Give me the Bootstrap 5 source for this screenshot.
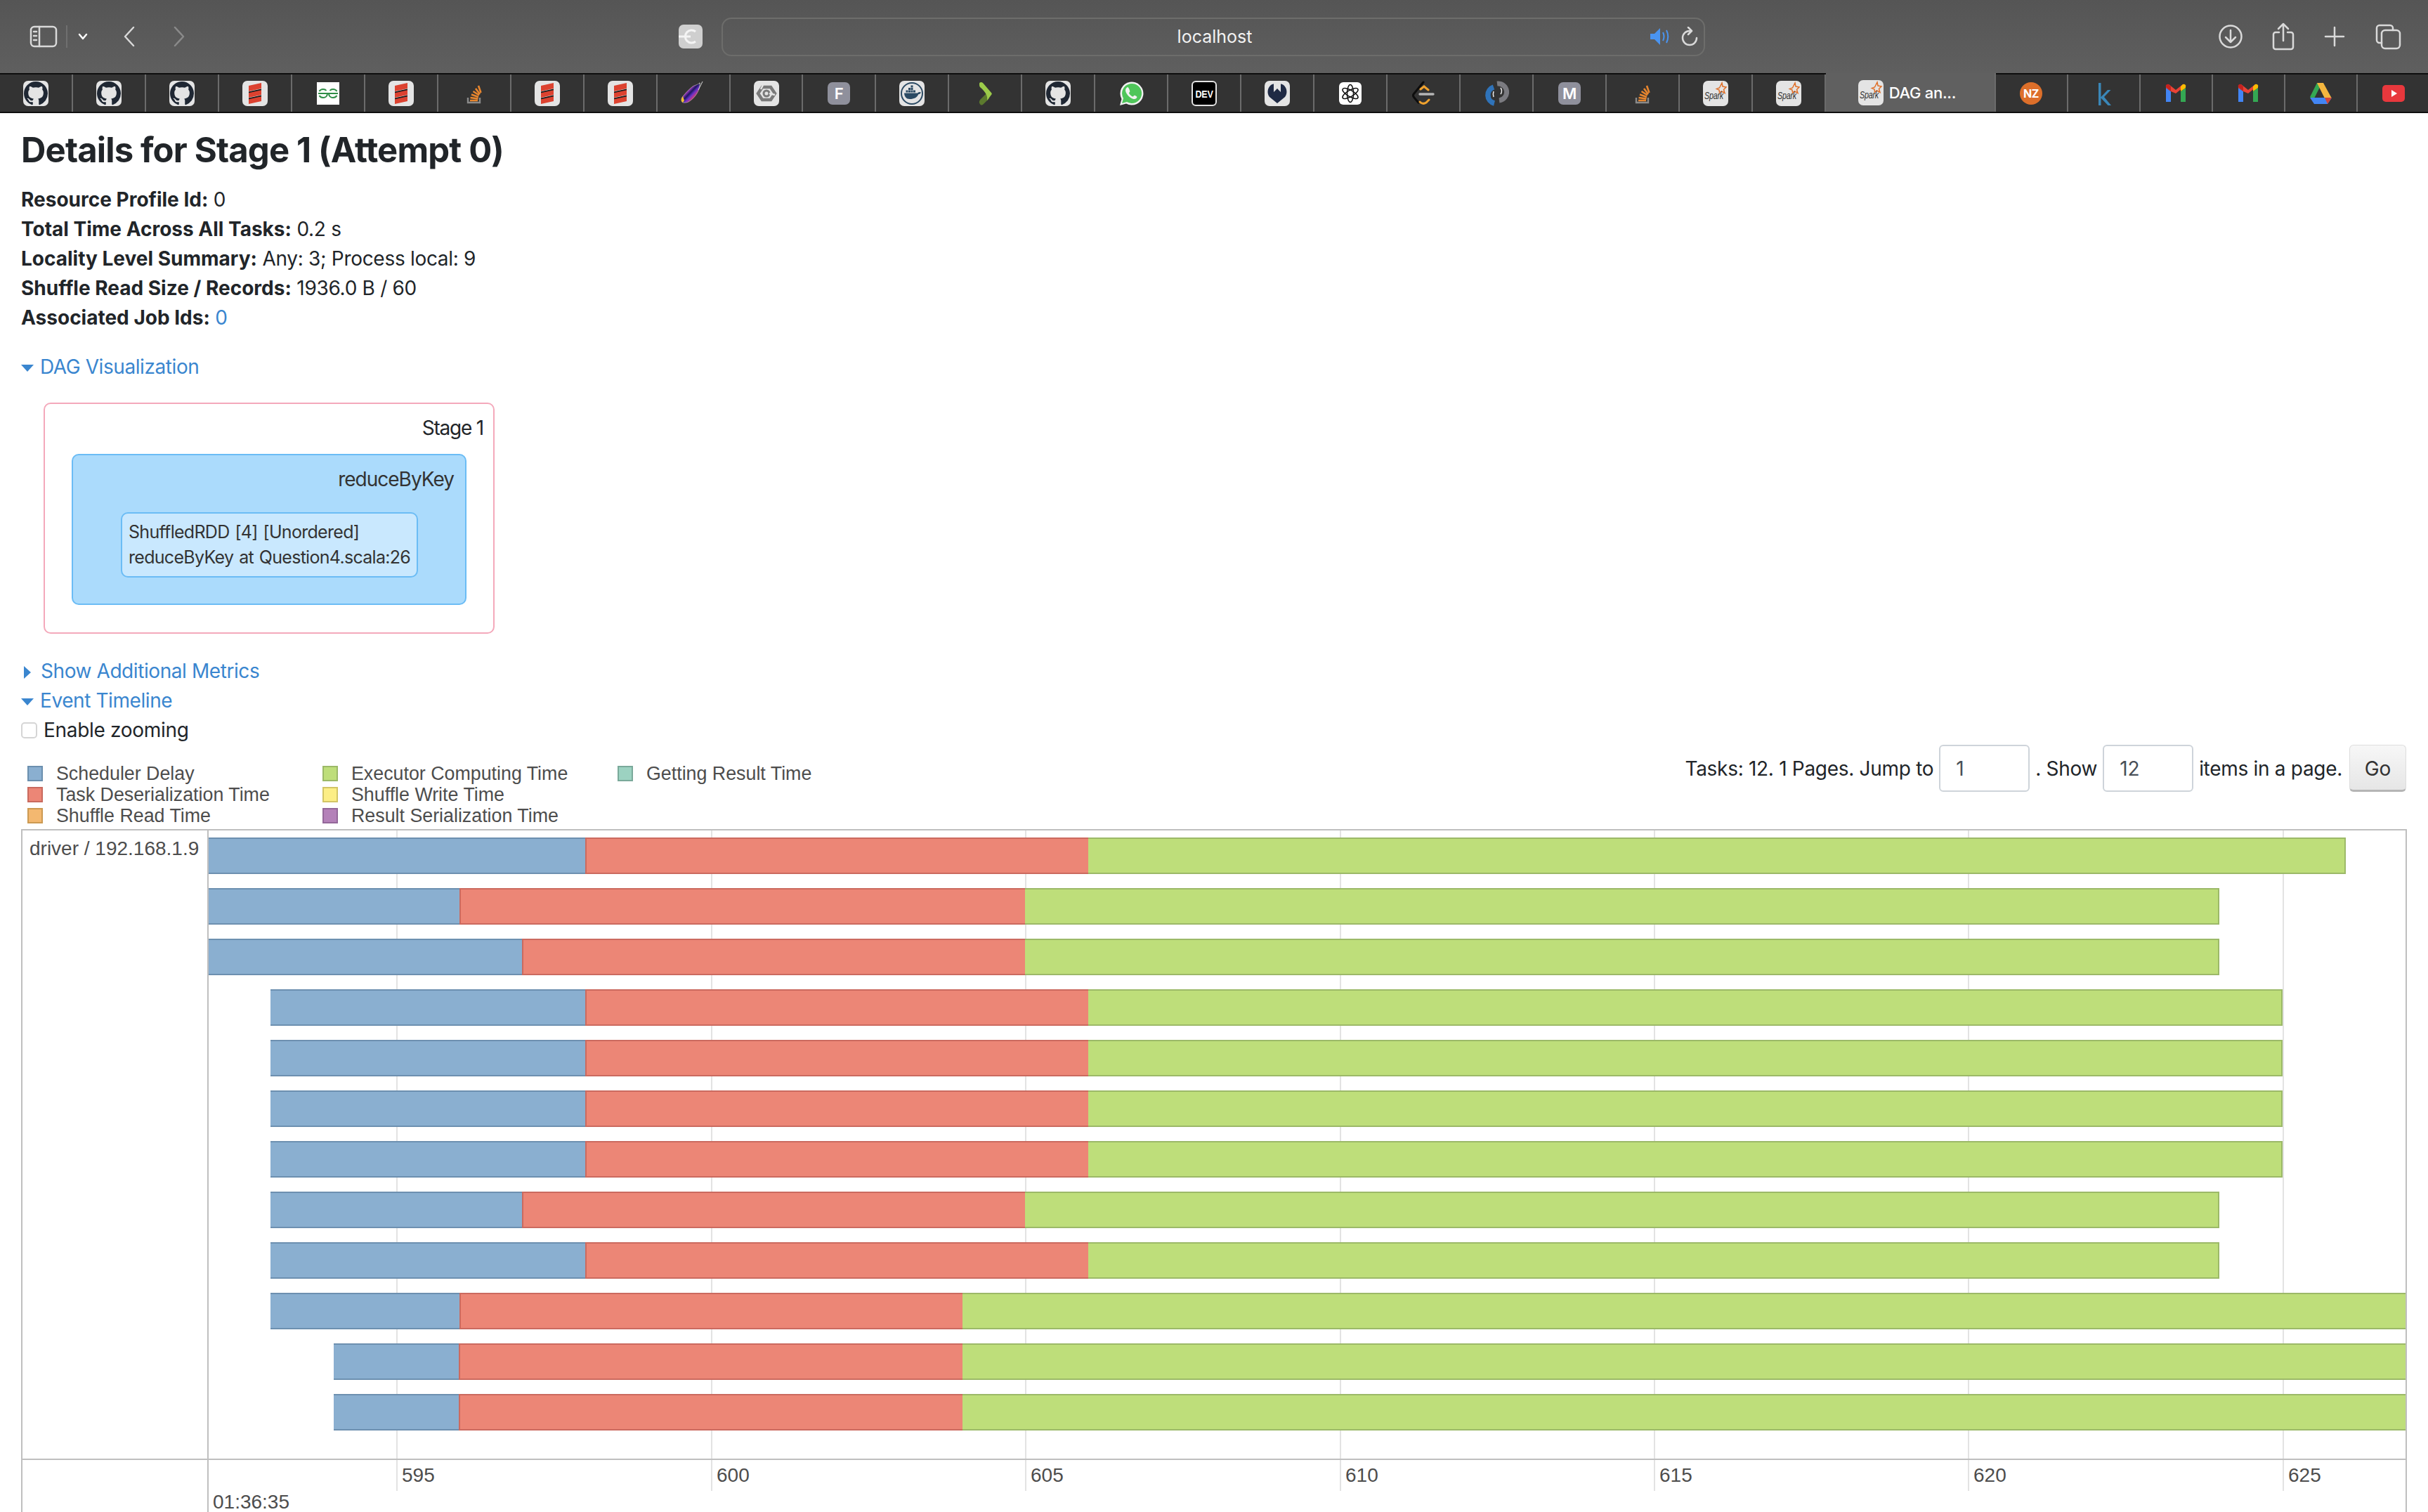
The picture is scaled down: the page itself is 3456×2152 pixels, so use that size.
<!DOCTYPE html>
<html lang="en">
<head>
  <meta charset="UTF-8">
  <title>Details for Stage 1 (Attempt 0)</title>
  <link href="https://cdn.jsdelivr.net/npm/bootstrap@5.3.0/dist/css/bootstrap.min.css" rel="stylesheet">
  <style>
    html, body { height: 100%; }
    body { font-family: Inter, "Liberation Sans", sans-serif; font-size: 28px; line-height: 42px; color: #212529; letter-spacing: -.3px; overflow: hidden; }
    strong { letter-spacing: 0; }
    a { color: #3a86cf; text-decoration: none; letter-spacing: -.42px; }

    /* browser chrome */
    .svg-defs { position: absolute; width: 0; height: 0; }
    .tool-bar { height: 104px; background: linear-gradient(#555, #5f5f5f); flex: none; }
    .tool-icon { fill: none; stroke: #d9d9d9; stroke-width: 2.5; stroke-linecap: round; stroke-linejoin: round; display: block; }
    .addr-bar { width: 1400px; height: 55px; border: 2px solid #6d6d6b; border-radius: 14px; color: #f2f2f2; font-size: 25px; letter-spacing: 0; padding-right: 6px; }
    .addr-text { left: 4px; right: 0; top: 0; bottom: 0; line-height: 51px; }
    .tab-strip { height: 57px; background: #333; border-top: 2px solid #0e0e0e; border-bottom: 2px solid #0e0e0e; flex: none; }
    .tab-cell { width: 103.96px; border-right: 2px solid #6b6b6b; flex: none; }
    .tab-right .tab-cell { width: 103px; }
    .tab-right .tab-cell:last-child { border-right: 0; flex: 1; }
    .tab-active { width: 242px; flex: none; margin-top: -2px; background: #606060; border-right: 2px solid #6b6b6b; color: #fff; font-size: 22px; letter-spacing: -.3px; padding-left: 46px; font-weight: 500; }
    .fav { width: 36px; height: 36px; display: block; }

    /* page */
    .stage-title { font-size: 49px; line-height: 58px; font-weight: 700; letter-spacing: -.85px; margin: 24px 0 20px; }
    .page-pad { padding-left: 30px; }
    .caret-down { display: inline-block; width: 0; height: 0; border-left: 9.5px solid transparent; border-right: 9.5px solid transparent; border-top: 10px solid #3a86cf; margin-right: 9px; vertical-align: 3px; }
    .caret-right { display: inline-block; width: 0; height: 0; border-top: 9px solid transparent; border-bottom: 9px solid transparent; border-left: 10px solid #3a86cf; margin: 0 14px 0 4px; vertical-align: -1px; }

    .dag-stage { width: 642px; height: 329px; margin: 30px 0 32px 32px; border: 2px solid #f4a9bb; border-radius: 10px; padding: 13px 14px 0 0; letter-spacing: -1.2px; }
    .dag-cluster { width: 562px; height: 215px; margin: 16px 0 0 38px; background: #abdbfc; border: 2px solid #6bbcf5; border-radius: 10px; padding: 13px 16px 0 0; color: #333; letter-spacing: -1px; }
    .dag-node { width: 423px; height: 93px; margin: 26px 0 0 68px; background: #c9e8fe; border: 2px solid #6bbcf5; border-radius: 10px; padding: 8px 0 0 9px; font-size: 25px; line-height: 36px; white-space: nowrap; color: #333; text-align: left; letter-spacing: -.7px; word-spacing: 1.5px; }

    .zoom-box { width: 23px; height: 23px; border: 2px solid #d5d5d5; border-radius: 5px; margin-right: 9px; background: #fff; flex: none; }

    .top-row { height: 120px; flex: none; padding-right: 31px; }
    .legend-grid { padding: 26px 0 0 9px; display: grid; grid-template-columns: repeat(3, 420px); grid-auto-flow: column; grid-template-rows: repeat(3, 30px); font-family: "Liberation Sans", sans-serif; font-size: 26.8px; line-height: 30px; letter-spacing: 0; color: #4d4d4d; }
    .legend-item { display: flex; align-items: center; gap: 19px; white-space: nowrap; }
    .swatch { width: 22px; height: 22px; border: 2px solid; flex: none; }
    .s-delay { background: #8aafd0; border-color: #6b8fae; }
    .s-deser { background: #ec8676; border-color: #c96a5e; }
    .s-read { background: #f3b870; border-color: #cc9a52; }
    .s-exec { background: #bede7a; border-color: #9cb968; }
    .s-write { background: #fcee86; border-color: #d2c566; }
    .s-ser { background: #b481b9; border-color: #94689a; }
    .s-result { background: #9cd2c1; border-color: #7aa99a; }

    .pager { height: 67px; font-size: 28px; letter-spacing: -.3px; gap: 8px; }
    .pager-input { width: 129px; height: 67px; border: 2px solid #ced4da; border-radius: 6px; padding: 0 22px; font-size: 28px; color: #495057; background: #fff; letter-spacing: 0; }
    .pager-go { width: 81px; height: 67px; padding: 2px 0 0; margin-left: 2px; border: 1px solid #ddd; border-bottom: 3px solid #b5b5b5; border-radius: 6px; background: linear-gradient(#f7f7f7, #e6e6e6); color: #333; font-size: 28px; line-height: 1; letter-spacing: 0; }

    /* timeline */
    .gantt { margin-left: 30px; width: 3396px; border: 2px solid #bfbfbf; border-bottom: 0; font-family: "Liberation Sans", sans-serif; letter-spacing: 0; color: #4d4d4d; min-height: 0; }
    .gantt-side { width: 265px; flex: none; border-right: 2px solid #bfbfbf; }
    .side-top { height: 896px; border-bottom: 2px solid #bfbfbf; padding: 5px 0 0 10px; white-space: nowrap; }
    .gantt-plot { min-width: 0; overflow: hidden; }
    .plot-rows { height: 896px; border-bottom: 2px solid #bfbfbf; padding-top: 10px; gap: 20px; }
    .tick-line { top: 0; width: 2px; height: 940px; background: #e3e3e3; }
    .tick-label { top: 897px; line-height: 42px; }
    .axis-date { margin: 42px 0 0 6px; line-height: 36px; }
    .task-row { height: 52px; flex: none; }
    .seg { height: 52px; flex: none; border: 2px solid; }
    .b-delay { background: #8aafd0; border-color: #6d90b0; border-left: 0; border-right: 0; }
    .b-deser { background: #ec8676; border-color: #cb6a5f; border-right: 0; }
    .b-exec { background: #bede7a; border-color: #9cb968; border-left: 0; }
  </style>
</head>
<body class="d-flex flex-column">

  <svg class="svg-defs" xmlns="http://www.w3.org/2000/svg">
    <defs>
      <linearGradient id="feather" x1="0" y1="0" x2="1" y2="1">
        <stop offset=".1" stop-color="#e0409a"/><stop offset=".36" stop-color="#a83ac8"/><stop offset=".48" stop-color="#1a1660"/><stop offset=".58" stop-color="#6a32c8"/><stop offset=".72" stop-color="#e03a70"/><stop offset="1" stop-color="#e03a30"/>
      </linearGradient>
    </defs>
    <symbol id="i-gh" viewBox="0 0 36 36">
      <rect width="36" height="36" rx="7" fill="#e4e4e4"/>
      <path transform="translate(1 1) scale(2.125)" fill="#1f2733" d="M8 0C3.58 0 0 3.58 0 8c0 3.54 2.29 6.53 5.47 7.59.4.07.55-.17.55-.38 0-.19-.01-.82-.01-1.49-2.01.37-2.53-.49-2.69-.94-.09-.23-.48-.94-.82-1.13-.28-.15-.68-.52-.01-.53.63-.01 1.08.58 1.23.82.72 1.21 1.87.87 2.33.66.07-.52.28-.87.51-1.07-1.78-.2-3.64-.89-3.64-3.95 0-.87.31-1.59.82-2.15-.08-.2-.36-1.02.08-2.12 0 0 .67-.21 2.2.82.64-.18 1.32-.27 2-.27.68 0 1.36.09 2 .27 1.53-1.04 2.2-.82 2.2-.82.44 1.1.16 1.92.08 2.12.51.56.82 1.27.82 2.15 0 3.07-1.87 3.75-3.65 3.95.29.25.54.73.54 1.48 0 1.07-.01 1.93-.01 2.2 0 .21.15.46.55.38A8.013 8.013 0 0016 8c0-4.42-3.58-8-8-8z"/>
    </symbol>
    <symbol id="i-scala" viewBox="0 0 36 36">
      <rect width="36" height="36" rx="7" fill="#e4e4e4"/>
      <path fill="#dc4230" d="M9 8 27 4v8L9 16zM9 17l18-4v8L9 25zM9 26l18-4v8L9 34z" transform="translate(0 -1)"/>
      <path fill="#1a1a1a" d="M9 15.500 27 11.500v1.800L9 17.300zM9 24.500 27 20.500v1.800L9 26.300z"/>
    </symbol>
    <symbol id="i-gfg" viewBox="0 0 36 36">
      <rect x="2" y="2" width="32" height="32" fill="#fff"/>
      <path fill="none" stroke="#2f8d46" stroke-width="2" d="M4 18h28M17 18c0 3.500-2.500 6-6 6-2.500 0-4.500-1.200-5.500-3M5.500 15c1-1.800 3-3 5.500-3 2 0 3.500.7 4.500 2M19 18c0 3.500 2.500 6 6 6 2.500 0 4.500-1.200 5.500-3M30.500 15c-1-1.800-3-3-5.500-3-2 0-3.500.7-4.500 2"/>
    </symbol>
    <symbol id="i-so" viewBox="0 0 36 36">
      <path fill="none" stroke="#8a8a8a" stroke-width="2.400" d="M9 24v7h17v-7"/>
      <path fill="none" stroke="#e8862e" stroke-width="2.600" d="M12 28h11M12.500 24l11 1.500M14 19.500l10 3.500M16.500 15l8.500 5.500M20 11l6 8M24 7l3.500 10"/>
    </symbol>
    <symbol id="i-feather" viewBox="0 0 36 36">
      <path fill="url(#feather)" stroke="#c9b9c0" stroke-width=".6" d="M1 28c-.5-3 .5-4 3-7 4-5 8-9 13-13 4-2.500 7-2 8-4l2 1c0 4-1 8-4 13-3 5-7 9-12 12-3 1.500-7 1.500-9 .5z"/>
      <path fill="#f2c12e" d="M1 29c-.5-3 .5-5 2-7l2 6-2 3z"/>
      <path fill="none" stroke="#d9d9d9" stroke-width="1" d="M31 1 25 13M26 3l2 1"/>
    </symbol>
    <symbol id="i-gc" viewBox="0 0 36 36">
      <rect width="36" height="36" rx="7" fill="#e4e4e4"/>
      <path fill="none" stroke="#7a7a7a" stroke-width="4.500" d="M12 9h12l6 9-6 9H12L6 18z"/>
      <circle cx="18" cy="18" r="4" fill="none" stroke="#7a7a7a" stroke-width="3"/>
      <path stroke="#e4e4e4" stroke-width="2.500" d="M13 6l-3 6M30 20l-8-2"/>
    </symbol>
    <symbol id="i-docker" viewBox="0 0 36 36">
      <rect width="36" height="36" rx="7" fill="#e4e4e4"/>
      <circle cx="18" cy="18" r="15" fill="none" stroke="#2b4a63" stroke-width="2"/>
      <path fill="#2b4a63" d="M7 17.500h19c1-1.500 3-2 5-1-1 2-2 2.500-3.500 2.500C25 24 21 26 15 26c-5 0-7.500-3-8-8.500z"/>
      <path fill="#2b4a63" d="M9.500 13.500h3v3h-3zM13 13.500h3v3h-3zM16.500 13.500h3v3h-3zM20 13.500h3v3h-3zM13 10h3v3h-3zM16.500 10h3v3h-3zM16.500 6.500h3v3h-3z"/>
    </symbol>
    <symbol id="i-chev" viewBox="0 0 36 36">
      <path fill="#5c7a2e" d="M11 33c-2-2-1-5 1-7l9-9 3 8-8 8c-2 2-4 2-5 0z"/>
      <path fill="#9ccb4a" d="M10 4c0-2 3-3 5-1l12 14c1 1 1 2 0 3l-6 8c1-6-1-11-10-19-1-1-1-3-1-5z"/>
    </symbol>
    <symbol id="i-wa" viewBox="0 0 36 36">
      <path fill="#f2f2f2" d="M2 35l2.500-9A16.500 16.500 0 1111 32.500z"/>
      <path fill="#4fc65a" d="M5 32l2-7A14 14 0 1112 30z"/>
      <path fill="#f2f2f2" d="M13 9c-1 .3-3 2-3 4.500 0 4 5.500 11 11.500 12.500 2.500.5 4.500-1 5-3 .1-.8-3.500-2.500-4-2.300-.5.300-1.300 1.500-1.800 1.800-1.500.2-5.500-3.500-5.700-5.200.3-.8 1.200-1.200 1.300-2 .1-.6-1.500-6-3.300-6.300z"/>
    </symbol>
    <symbol id="i-well" viewBox="0 0 36 36">
      <rect width="36" height="36" rx="7" fill="#e4e4e4"/>
      <path fill="#1f2a44" d="M18 32 7 23C3 18 4 10 9 6c1-.8 3-1.500 4-1.500V16l5-5 5 5V4.500c1 0 3 .7 4 1.500 5 4 6 12 2 17z"/>
      <path fill="#e4e4e4" d="M14.500 3h2v9l-2 2zM19.500 3h2v11l-2-2z"/>
    </symbol>
    <symbol id="i-gpt" viewBox="0 0 36 36">
      <rect x="2" y="2" width="32" height="32" rx="6" fill="#fff"/>
      <g fill="none" stroke="#111" stroke-width="1.500">
        <ellipse cx="18" cy="18" rx="4.500" ry="12.500"/>
        <ellipse cx="18" cy="18" rx="4.500" ry="12.500" transform="rotate(60 18 18)"/>
        <ellipse cx="18" cy="18" rx="4.500" ry="12.500" transform="rotate(120 18 18)"/>
      </g>
    </symbol>
    <symbol id="i-lc" viewBox="0 0 36 36">
      <path fill="none" stroke="#0d0d0d" stroke-width="3" stroke-linecap="round" d="M18 2 4 19c-1 2-1 3 1 5l6 7"/>
      <path fill="none" stroke="#f0a22e" stroke-width="3" stroke-linecap="round" d="M14 12l5-4 6 5M13 30c3 3 6 3 9 1l4-4"/>
      <path stroke="#b5b5b5" stroke-width="3.400" stroke-linecap="round" d="M13 19h19"/>
    </symbol>
    <symbol id="i-ring" viewBox="0 0 36 36">
      <path fill="none" stroke="#7b7b80" stroke-width="7" d="M19 4a12 12 0 013 24"/>
      <path fill="none" stroke="#2f73b9" stroke-width="7.500" d="M15 32a12 12 0 01-1-23"/>
      <path fill="none" stroke="#eee" stroke-width="1.500" d="M24 10c2 3 2 6 0 9M14 15c-1 3-1 5 0 8"/>
    </symbol>
    <symbol id="i-k" viewBox="0 0 36 36">
      <path transform="translate(2 0)" fill="#3a87b8" d="M9 3h3.500v20L22 13h4.500L17 23l10 12h-4.500L12.500 24.500V35H9z"/>
    </symbol>
    <symbol id="i-gmail" viewBox="0 0 36 36">
      <path fill="#4285f4" d="M4 30V10l7 5v15z"/>
      <path fill="#34a853" d="M25 30V15l7-5v20z"/>
      <path fill="#ea4335" d="M11 15 4 10V8l4-3 10 8 10-8v5l-10 8z"/>
      <path fill="#c5221f" d="M4 9a3 3 0 014-4l3 3v7z"/>
      <path fill="#fbbc04" d="M25 8l3-3a3 3 0 014 4v1l-7 5z"/>
    </symbol>
    <symbol id="i-drive" viewBox="0 0 36 36">
      <path fill="#34a853" d="M13 3 3 23l5 4L18 7z"/>
      <path fill="#f4b63f" d="M13 3h9l12 22H24z"/>
      <path fill="#4285f4" d="M3 24h31l-6 9H9z"/>
      <path fill="#d2453a" d="M24 24h10l-6 9z"/>
    </symbol>
    <symbol id="i-yt" viewBox="0 0 36 36">
      <rect x="2" y="6" width="32" height="24" rx="5" fill="#e8383d"/>
      <path fill="#fff" d="M15 13v10l8-5z"/>
    </symbol>
    <symbol id="i-spark-bg" viewBox="0 0 36 36">
      <rect width="36" height="36" rx="7" fill="#e4e4e4"/>
      <path fill="none" stroke="#e0702a" stroke-width="1.500" d="M27 3l1 5 5 1-3.500 3.500 1.500 5-4.500-2.500-3 2-.5-4-3.500-1.500 4-1.500z"/>
    </symbol>
  </svg>

  <!-- toolbar -->
  <div class="tool-bar d-flex align-items-center position-relative">
    <svg class="tool-icon" style="margin-left:42px" width="40" height="32" viewBox="0 0 40 32"><rect x="2" y="2" width="36" height="28" rx="5"/><path d="M14 2v28M6 9h4M6 15h4M6 21h4"/></svg>
    <div style="width:2px;height:32px;background:#6f6f6f;margin-left:12px"></div>
    <svg class="tool-icon" style="margin-left:15px;stroke:#fff" width="14" height="10" viewBox="0 0 14 10"><path d="M2 2l5 6 5-6"/></svg>
    <svg class="tool-icon" style="margin-left:50px" width="18" height="30" viewBox="0 0 18 30"><path d="M15 2 3 15l12 13"/></svg>
    <svg class="tool-icon" style="margin-left:53px;stroke:#8a8a8a" width="18" height="30" viewBox="0 0 18 30"><path d="M3 2l12 13L3 28"/></svg>
    <svg style="margin-left:702px" width="34" height="34" viewBox="0 0 34 34"><rect width="34" height="34" rx="7" fill="#cfcfcf"/><path fill="none" stroke="#f4f4f4" stroke-width="3" d="M24 10a9 9 0 100 14M0 17h17"/></svg>
    <div class="addr-bar position-relative d-flex align-items-center justify-content-end" style="margin-left:27px">
      <div class="addr-text position-absolute text-center">localhost</div>
      <svg class="position-relative" width="30" height="24" viewBox="0 0 30 24"><path fill="#4a94f0" d="M0 8h6l8-8v24l-8-8H0z"/><path fill="none" stroke="#4a94f0" stroke-width="2" d="M18 6c2 4 2 8 0 12M23 3c3 6 3 12 0 18"/></svg>
      <svg class="tool-icon position-relative" style="margin-left:12px" width="28" height="28" viewBox="0 0 28 28"><path d="M14 6a10 10 0 1 0 10 10M12 1l5 5-5 5"/></svg>
    </div>
    <svg class="tool-icon" style="margin-left:auto" width="36" height="36" viewBox="0 0 36 36"><circle cx="18" cy="18" r="15.500"/><path d="M18 9v17M11 19l7 7 7-7"/></svg>
    <svg class="tool-icon" style="margin-left:41px" width="32" height="40" viewBox="0 0 32 40"><path d="M10 14H5a3 3 0 0 0-3 3v18a3 3 0 0 0 3 3h22a3 3 0 0 0 3-3V17a3 3 0 0 0-3-3h-5M16 26V3M9 9l7-7 7 7"/></svg>
    <svg class="tool-icon" style="margin-left:42px" width="30" height="30" viewBox="0 0 30 30"><path d="M15 2v26M2 15h26"/></svg>
    <svg class="tool-icon" style="margin-left:43px;margin-right:38px" width="37" height="37" viewBox="0 0 37 37"><rect x="9" y="9" width="26" height="26" rx="5"/><path d="M9 27H6a4 4 0 0 1-4-4V6a4 4 0 0 1 4-4h15a4 4 0 0 1 4 4v3"/></svg>
  </div>

  <!-- tab strip -->
  <div class="tab-strip d-flex">
    <div class="tab-cell d-flex align-items-center justify-content-center"><svg class="fav"><use href="#i-gh"/></svg></div>
    <div class="tab-cell d-flex align-items-center justify-content-center"><svg class="fav"><use href="#i-gh"/></svg></div>
    <div class="tab-cell d-flex align-items-center justify-content-center"><svg class="fav"><use href="#i-gh"/></svg></div>
    <div class="tab-cell d-flex align-items-center justify-content-center"><svg class="fav"><use href="#i-scala"/></svg></div>
    <div class="tab-cell d-flex align-items-center justify-content-center"><svg class="fav"><use href="#i-gfg"/></svg></div>
    <div class="tab-cell d-flex align-items-center justify-content-center"><svg class="fav"><use href="#i-scala"/></svg></div>
    <div class="tab-cell d-flex align-items-center justify-content-center"><svg class="fav"><use href="#i-so"/></svg></div>
    <div class="tab-cell d-flex align-items-center justify-content-center"><svg class="fav"><use href="#i-scala"/></svg></div>
    <div class="tab-cell d-flex align-items-center justify-content-center"><svg class="fav"><use href="#i-scala"/></svg></div>
    <div class="tab-cell d-flex align-items-center justify-content-center"><svg class="fav"><use href="#i-feather"/></svg></div>
    <div class="tab-cell d-flex align-items-center justify-content-center"><svg class="fav"><use href="#i-gc"/></svg></div>
    <div class="tab-cell d-flex align-items-center justify-content-center"><svg class="fav" viewBox="0 0 36 36"><rect x="2" y="2" width="32" height="32" rx="7" fill="#8f909c"/><text x="18" y="26" text-anchor="middle" font-family="Inter, sans-serif" font-weight="600" font-size="22" fill="#fff">F</text></svg></div>
    <div class="tab-cell d-flex align-items-center justify-content-center"><svg class="fav"><use href="#i-docker"/></svg></div>
    <div class="tab-cell d-flex align-items-center justify-content-center"><svg class="fav"><use href="#i-chev"/></svg></div>
    <div class="tab-cell d-flex align-items-center justify-content-center"><svg class="fav"><use href="#i-gh"/></svg></div>
    <div class="tab-cell d-flex align-items-center justify-content-center"><svg class="fav"><use href="#i-wa"/></svg></div>
    <div class="tab-cell d-flex align-items-center justify-content-center"><svg class="fav" viewBox="0 0 36 36"><rect x="1" y="1" width="34" height="34" rx="5" fill="#000" stroke="#e4e4e4" stroke-width="2"/><text x="18" y="23.500" text-anchor="middle" font-family="Liberation Sans, sans-serif" font-weight="700" font-size="14" fill="#fff" textLength="25" lengthAdjust="spacingAndGlyphs">DEV</text></svg></div>
    <div class="tab-cell d-flex align-items-center justify-content-center"><svg class="fav"><use href="#i-well"/></svg></div>
    <div class="tab-cell d-flex align-items-center justify-content-center"><svg class="fav"><use href="#i-gpt"/></svg></div>
    <div class="tab-cell d-flex align-items-center justify-content-center"><svg class="fav"><use href="#i-lc"/></svg></div>
    <div class="tab-cell d-flex align-items-center justify-content-center"><svg class="fav"><use href="#i-ring"/></svg></div>
    <div class="tab-cell d-flex align-items-center justify-content-center"><svg class="fav" viewBox="0 0 36 36"><rect x="2" y="2" width="32" height="32" rx="7" fill="#8f909c"/><text x="18" y="26" text-anchor="middle" font-family="Inter, sans-serif" font-weight="600" font-size="22" fill="#fff">M</text></svg></div>
    <div class="tab-cell d-flex align-items-center justify-content-center"><svg class="fav"><use href="#i-so"/></svg></div>
    <div class="tab-cell d-flex align-items-center justify-content-center"><svg class="fav" viewBox="0 0 36 36"><use href="#i-spark-bg"/><text x="2" y="26" font-family="Liberation Sans, sans-serif" font-style="italic" font-size="14" fill="#333" textLength="27" lengthAdjust="spacingAndGlyphs">Spark</text></svg></div>
    <div class="tab-cell d-flex align-items-center justify-content-center"><svg class="fav" viewBox="0 0 36 36"><use href="#i-spark-bg"/><text x="2" y="26" font-family="Liberation Sans, sans-serif" font-style="italic" font-size="14" fill="#333" textLength="27" lengthAdjust="spacingAndGlyphs">Spark</text></svg></div>
    <div class="tab-active d-flex align-items-center gap-2"><svg class="fav" viewBox="0 0 36 36"><use href="#i-spark-bg"/><text x="2" y="26" font-family="Liberation Sans, sans-serif" font-style="italic" font-size="14" fill="#333" textLength="27" lengthAdjust="spacingAndGlyphs">Spark</text></svg><span>DAG an...</span></div>
    <div class="tab-right d-flex flex-grow-1">
      <div class="tab-cell d-flex align-items-center justify-content-center"><svg class="fav" viewBox="0 0 36 36"><circle cx="18" cy="18" r="16" fill="#dd6f2a"/><text x="18" y="24" text-anchor="middle" font-family="Inter, sans-serif" font-weight="700" font-size="16" fill="#fff">NZ</text></svg></div>
      <div class="tab-cell d-flex align-items-center justify-content-center"><svg class="fav"><use href="#i-k"/></svg></div>
      <div class="tab-cell d-flex align-items-center justify-content-center"><svg class="fav"><use href="#i-gmail"/></svg></div>
      <div class="tab-cell d-flex align-items-center justify-content-center"><svg class="fav"><use href="#i-gmail"/></svg></div>
      <div class="tab-cell d-flex align-items-center justify-content-center"><svg class="fav"><use href="#i-drive"/></svg></div>
      <div class="tab-cell d-flex align-items-center justify-content-center"><svg class="fav"><use href="#i-yt"/></svg></div>
    </div>
  </div>

  <!-- page -->
  <div class="page-pad flex-none">
    <h3 class="stage-title">Details for Stage 1 (Attempt 0)</h3>
    <div><strong>Resource Profile Id:</strong> 0</div>
    <div><strong>Total Time Across All Tasks:</strong> 0.2 s</div>
    <div><strong>Locality Level Summary:</strong> Any: 3; Process local: 9</div>
    <div><strong>Shuffle Read Size / Records:</strong> 1936.0 B / 60</div>
    <div><strong>Associated Job Ids:</strong> <a href="#">0</a></div>
    <div style="margin-top:28px"><a href="#"><span class="caret-down"></span>DAG Visualization</a></div>

    <div class="dag-stage text-end">
      Stage 1
      <div class="dag-cluster">
        reduceByKey
        <div class="dag-node">ShuffledRDD [4] [Unordered]<br>reduceByKey at Question4.scala:26</div>
      </div>
    </div>

    <div><a href="#"><span class="caret-right"></span>Show Additional Metrics</a></div>
    <div><a href="#"><span class="caret-down"></span>Event Timeline</a></div>
    <div class="d-flex align-items-center"><span class="zoom-box"></span>Enable zooming</div>
  </div>

  <div class="top-row d-flex justify-content-between page-pad">
    <div class="legend-grid">
      <div class="legend-item"><span class="swatch s-delay"></span>Scheduler Delay</div>
      <div class="legend-item"><span class="swatch s-deser"></span>Task Deserialization Time</div>
      <div class="legend-item"><span class="swatch s-read"></span>Shuffle Read Time</div>
      <div class="legend-item"><span class="swatch s-exec"></span>Executor Computing Time</div>
      <div class="legend-item"><span class="swatch s-write"></span>Shuffle Write Time</div>
      <div class="legend-item"><span class="swatch s-ser"></span>Result Serialization Time</div>
      <div class="legend-item"><span class="swatch s-result"></span>Getting Result Time</div>
    </div>
    <div class="pager d-flex align-items-center">
      <span>Tasks: 12. 1 Pages. Jump to</span>
      <input class="pager-input" type="text" value="1">
      <span>. Show</span>
      <input class="pager-input" type="text" value="12">
      <span>items in a page.</span>
      <button class="pager-go" type="button">Go</button>
    </div>
  </div>

  <div class="gantt d-flex flex-grow-1">
    <div class="gantt-side">
      <div class="side-top">driver / 192.168.1.9</div>
    </div>
    <div class="gantt-plot flex-grow-1 position-relative">
      <!-- 89.5px per ms -->
      <div class="tick-line position-absolute" style="left:267px"></div>
      <div class="tick-line position-absolute" style="left:715px"></div>
      <div class="tick-line position-absolute" style="left:1162px"></div>
      <div class="tick-line position-absolute" style="left:1610px"></div>
      <div class="tick-line position-absolute" style="left:2057px"></div>
      <div class="tick-line position-absolute" style="left:2504px"></div>
      <div class="tick-line position-absolute" style="left:2952px"></div>
      <div class="tick-label position-absolute" style="left:275px">595</div>
      <div class="tick-label position-absolute" style="left:723px">600</div>
      <div class="tick-label position-absolute" style="left:1170px">605</div>
      <div class="tick-label position-absolute" style="left:1618px">610</div>
      <div class="tick-label position-absolute" style="left:2065px">615</div>
      <div class="tick-label position-absolute" style="left:2512px">620</div>
      <div class="tick-label position-absolute" style="left:2960px">625</div>

      <div class="plot-rows d-flex flex-column position-relative">
        <div class="task-row d-flex"><div class="seg b-delay" style="width:536px"></div><div class="seg b-deser" style="width:716px"></div><div class="seg b-exec" style="width:1790px"></div></div>
        <div class="task-row d-flex"><div class="seg b-delay" style="width:357px"></div><div class="seg b-deser" style="width:805px"></div><div class="seg b-exec" style="width:1700px"></div></div>
        <div class="task-row d-flex"><div class="seg b-delay" style="width:446px"></div><div class="seg b-deser" style="width:716px"></div><div class="seg b-exec" style="width:1700px"></div></div>
        <div class="task-row d-flex" style="margin-left:88px"><div class="seg b-delay" style="width:448px"></div><div class="seg b-deser" style="width:716px"></div><div class="seg b-exec" style="width:1700px"></div></div>
        <div class="task-row d-flex" style="margin-left:88px"><div class="seg b-delay" style="width:448px"></div><div class="seg b-deser" style="width:716px"></div><div class="seg b-exec" style="width:1700px"></div></div>
        <div class="task-row d-flex" style="margin-left:88px"><div class="seg b-delay" style="width:448px"></div><div class="seg b-deser" style="width:716px"></div><div class="seg b-exec" style="width:1700px"></div></div>
        <div class="task-row d-flex" style="margin-left:88px"><div class="seg b-delay" style="width:448px"></div><div class="seg b-deser" style="width:716px"></div><div class="seg b-exec" style="width:1700px"></div></div>
        <div class="task-row d-flex" style="margin-left:88px"><div class="seg b-delay" style="width:358px"></div><div class="seg b-deser" style="width:716px"></div><div class="seg b-exec" style="width:1700px"></div></div>
        <div class="task-row d-flex" style="margin-left:88px"><div class="seg b-delay" style="width:448px"></div><div class="seg b-deser" style="width:716px"></div><div class="seg b-exec" style="width:1610px"></div></div>
        <div class="task-row d-flex" style="margin-left:88px"><div class="seg b-delay" style="width:269px"></div><div class="seg b-deser" style="width:716px"></div><div class="seg b-exec" style="width:2100px"></div></div>
        <div class="task-row d-flex" style="margin-left:178px"><div class="seg b-delay" style="width:178px"></div><div class="seg b-deser" style="width:717px"></div><div class="seg b-exec" style="width:2100px"></div></div>
        <div class="task-row d-flex" style="margin-left:178px"><div class="seg b-delay" style="width:178px"></div><div class="seg b-deser" style="width:717px"></div><div class="seg b-exec" style="width:2100px"></div></div>
      </div>
      <div class="axis-date">01:36:35</div>
    </div>
  </div>

  <script src="https://cdn.jsdelivr.net/npm/bootstrap@5.3.0/dist/js/bootstrap.bundle.min.js"></script>
</body>
</html>
